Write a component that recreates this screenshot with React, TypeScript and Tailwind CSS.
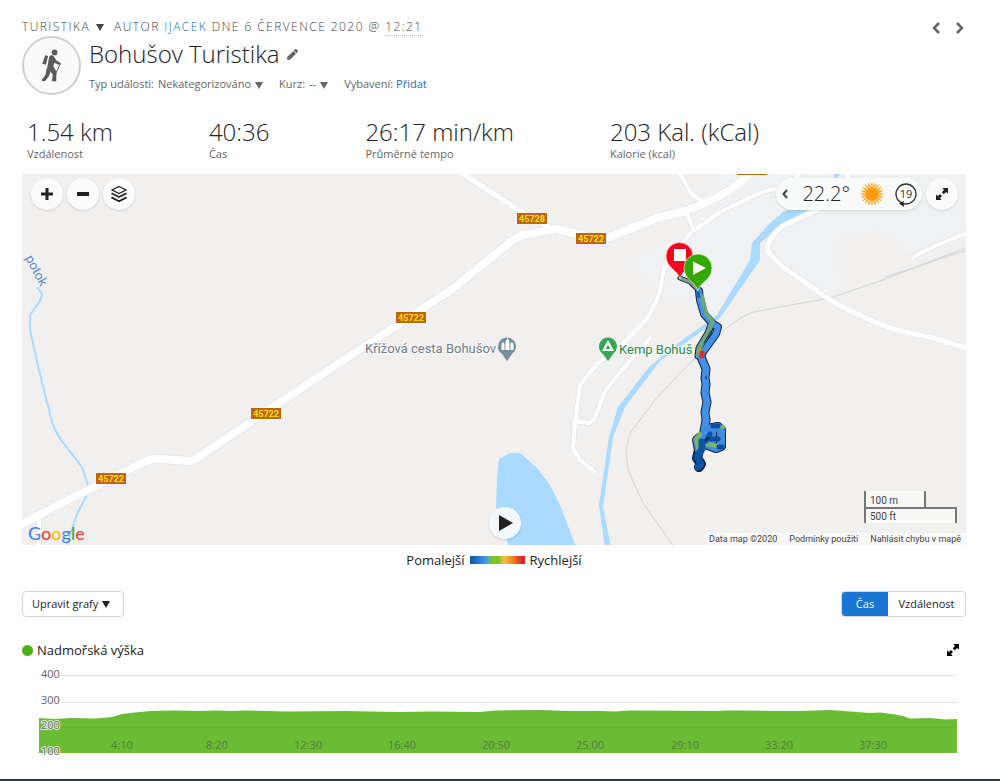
import { useState } from "react";
import { FaPen } from "react-icons/fa";

const stats = [
  { value: "1.54 km", label: "Vzdálenost" },
  { value: "40:36", label: "Čas" },
  { value: "26:17 min/km", label: "Průměrné tempo" },
  { value: "203 Kal. (kCal)", label: "Kalorie (kcal)" },
];

const shields = [
  { x: 532, y: 218, text: "45728" },
  { x: 591, y: 238, text: "45722" },
  { x: 411, y: 317, text: "45722" },
  { x: 266, y: 413, text: "45722" },
  { x: 111, y: 478, text: "45722" },
];

const roads = [
  { d: "M457 170L520 211L552 229", w: 5 },
  { d: "M678 170L692 195L706 203", w: 4 },
  { d: "M686 213L693 228", w: 4 },
  { d: "M39 514V550", w: 4 },
  { d: "M802 170L790 186L777 189Q766 190 760 193L720 212L693 231L672 254Q663 266 662 280Q660 300 645 321L620 347L597 364L580 385L575 423L573 449L580 460L595 472", w: 4 },
  { d: "M576 421L588 423Q594 422 596 415L605 391L628 363L650 338", w: 4 },
  { d: "M850 170L840 196L817 210L783 226Q763 242 769 253L783 267L830 300Q870 322 897 330L933 338L970 349", w: 5 },
  { d: "M913 257L937 245L970 232", w: 4 },
  { d: "M15 528L60 504L110 479L146 461Q153 458 161 459L190 461Q194 460 200 456L333 367L410 317L455 287L503 248Q514 238 523 235L557 229L590 237Q600 240 610 237L657 218L682 212Q695 208 705 203Q730 193 752 172", w: 8 },
];

const yTicks = [
  { y: 15, text: "400" },
  { y: 41, text: "300" },
  { y: 66, text: "200" },
  { y: 92, text: "100" },
];

const xTicks = [
  { x: 99, text: "4:10" },
  { x: 194, text: "8:20" },
  { x: 285, text: "12:30" },
  { x: 379, text: "16:40" },
  { x: 473, text: "20:50" },
  { x: 567, text: "25:00" },
  { x: 662, text: "29:10" },
  { x: 756, text: "33:20" },
  { x: 850, text: "37:30" },
];

function Caret({ className = "" }: { className?: string }) {
  return (
    <svg viewBox="0 0 8 7" className={`h-[7px] w-2 shrink-0 ${className}`} fill="currentColor" aria-hidden="true">
      <path d="M0 0H8L4 7Z" />
    </svg>
  );
}

function ExpandIcon({ className = "" }: { className?: string }) {
  return (
    <svg viewBox="0 0 12 12" className={className} fill="currentColor" aria-hidden="true">
      <path d="M6.5 0H12V5.5L10 4L7.8 6.2L5.8 4.2L8 2Z" />
      <path d="M0 6.5L2 8L4 6L6 8L4 10L5.5 12H0Z" />
    </svg>
  );
}

function Hiker() {
  return (
    <svg viewBox="120 147 65 101" className="h-[33px] w-[21px] text-[#5b5b5b]" fill="currentColor" aria-hidden="true">
      <circle cx="162" cy="157" r="9" />
      <path d="M133 166L142 168L135 195L124 192Z" />
      <path d="M146 168Q152 163 159 168L167 181L180 190L177 196L161 189L158 200L168 217L167 246H155L156 224L139 206Z" />
      <path d="M138 204L150 217L143 233L131 247L121 244L134 226Z" />
      <path d="M181 190L154 246" stroke="currentColor" strokeWidth="3" />
    </svg>
  );
}

function LayersIcon() {
  return (
    <svg viewBox="0 0 18 18" className="size-[18px]" fill="none" stroke="currentColor" aria-hidden="true">
      <path d="M9 1.5L16 5L9 8.5L2 5Z" strokeWidth="1.3" />
      <path d="M1.5 8.2L9 12L16.5 8.2" strokeWidth="1.8" />
      <path d="M1.5 12.4L9 16.2L16.5 12.4" strokeWidth="1.8" />
    </svg>
  );
}

function Sun() {
  const rays = Array.from({ length: 20 }, (_, i) => i * 18);
  return (
    <svg viewBox="0 0 24 24" className="size-6" fill="#fb9d0a" aria-hidden="true">
      <circle cx="12" cy="12" r="7" />
      {rays.map((a) => (
        <path key={a} d="M11.2 4.4L12 0.4L12.8 4.4Z" stroke="#fb9d0a" strokeWidth="0.4" transform={`rotate(${a} 12 12)`} />
      ))}
    </svg>
  );
}

function Wind() {
  return (
    <svg viewBox="0 0 24 26" className="h-[26px] w-6" aria-hidden="true">
      <circle cx="12" cy="13" r="10" fill="none" stroke="#333" strokeWidth="1.3" />
      <path d="M5 22.5L9.5 20L10 26Z" fill="#222" />
      <text x="12" y="17" textAnchor="middle" fontSize="11" fill="#333">19</text>
    </svg>
  );
}

function ActivityMap() {
  return (
    <svg
      viewBox="22 174 944 371"
      preserveAspectRatio="xMidYMid slice"
      className="block size-full"
      role="img"
      aria-label="Mapa trasy"
      fontFamily="Roboto, sans-serif"
    >
      <rect x="22" y="174" width="944" height="371" fill="#f1f0ef" />
      <path
        fill="#eff1f3"
        d="M630 262L666 245L690 228L715 174H966V232L913 257L880 230L835 240L842 290L820 297L770 255L740 290L712 315L665 296Z"
      />

      {/* water */}
      <g fill="#aadaff">
        <path d="M835 170L840 174L825 196L810 209L783 224L760 243V260L720 318L677 349L660 361L625 407L613 437L603 507L611 548H605L599 505L609 437L618 407L650 366L677 344L717 315L750 260L752 243L767 226L783 212L800 204L834 180Z" />
        <path d="M499 459L510 453L520 453L537 468L550 485L560 505L576 547H509L496 507L497 477Z" />
      </g>
      <path d="M37 287L42 294L40 301L30 315V330L39 370L51 418Q54 430 61 440L82 467L88 485L87 495L78 512L74 523L66 548" fill="none" stroke="#aadaff" strokeWidth="2" />

      {/* railway */}
      <g fill="none" stroke="#d3d3d3">
        <path d="M970 246L883 280L830 298Q790 305 753 312Q740 317 728 327L683 370L655 400L630 433L626 450L628 470L643 503L675 548" />
        <path d="M970 249L885 277" />
      </g>

      <g fill="none" strokeLinejoin="round" strokeLinecap="round">
        {roads.map((r) => (
          <path key={r.d} d={r.d} stroke="#e1e3e6" strokeWidth={r.w + 1.4} />
        ))}
        {roads.map((r) => (
          <path key={r.d} d={r.d} stroke="#ffffff" strokeWidth={r.w} />
        ))}
      </g>

      {shields.map((s) => (
        <g key={`${s.x}-${s.y}`}>
          <rect x={s.x - 15} y={s.y - 5} width="30" height="11" fill="#b9690e" />
          <text x={s.x} y={s.y + 4} textAnchor="middle" fontSize="9" fontWeight="700" fill="#ffdb1c">
            {s.text}
          </text>
        </g>
      ))}
      <rect x="737" y="173" width="30" height="2" fill="#b9690e" />

      <text transform="translate(25 258) rotate(62)" fontSize="13" fill="#5a8cc9">potok</text>

      <g fontSize="13" strokeWidth="2" stroke="#f7f7f7" paintOrder="stroke">
        <text x="365" y="353" fill="#708089">Křížová cesta Bohušov</text>
        <text x="619" y="354" fill="#2f8a4c">Kemp Bohuš</text>
      </g>

      <path d="M507 361L502 354A9 9 0 1 1 512 354Z" fill="#78909c" />
      <path d="M501.500 350V344L503 342L504.500 344V350ZM505.500 350V342L507.500 338L509.500 342V350ZM510.500 350V344L512 342L513.500 344V350Z" fill="#fff" />
      <path d="M608 361L603 354A9 9 0 1 1 613 354Z" fill="#34a853" />
      <path fillRule="evenodd" d="M602 351L608 340L614 351ZM605.500 349H610.500L608 345Z" fill="#fff" />

      {/* recorded track */}
      <g fill="none" strokeLinejoin="round" strokeLinecap="round">
        <g stroke="#0f2140">
          <path d="M680 278L690 282L698 290" strokeWidth="5" />
          <path d="M699 291L700 300L704 314L713 324L718 327L716 334L703 352L701 357" strokeWidth="8" />
          <path d="M711 325L708 333L699 348L698 356" strokeWidth="7" />
          <path d="M701 357L706 369L705 378L706 384L705 393L707 402L705 412L706 420L704 431" strokeWidth="9" />
          <path d="M707 429L718 427L721 430V446L716 448L706 444L705 434L697 440L699 450L697 458L701 464L699 467" strokeWidth="10" />
        </g>
        <path d="M680 278L690 282L698 290" stroke="#7da58c" strokeWidth="3" />
        <path d="M699 291L700 300L704 314L713 324L718 327L716 334L703 352L701 357" stroke="#4391e6" strokeWidth="6" />
        <path d="M711 325L708 333L699 348L698 356" stroke="#6da58a" strokeWidth="5" />
        <path d="M701 357L706 369L705 378L706 384L705 393L707 402L705 412L706 420L704 431" stroke="#4391e6" strokeWidth="7" />
        <path d="M702 296L706 313L713 322" stroke="#6da57e" strokeWidth="4" />
        <path d="M698 292L699 297" stroke="#1261b4" strokeWidth="3" />
        <path d="M711 331L704 343" stroke="#0f2140" strokeWidth="1" />
        <path d="M700 349L699 352" stroke="#a1a544" strokeWidth="3" />
        <path d="M702 353V356" stroke="#d9303a" strokeWidth="5" />
        <path d="M706 376V379" stroke="#0f2140" strokeWidth="1" />
        <path d="M707 429L718 427L721 430V446L716 448L706 444L705 434L697 440L699 450" stroke="#3f8de0" strokeWidth="8" />
        <path d="M712 432V440" stroke="#3f8de0" strokeWidth="8" />
        <path d="M700 434L696 439L698 448M706 444L717 446M722 427H723" stroke="#79b765" strokeWidth="4" />
        <path d="M713 426H718M706 441L710 434M711 439H718M719 447H722" stroke="#0b4f9f" strokeWidth="5" />
        <path d="M702 442V449L697 457L701 464L698 467" stroke="#0d54a8" strokeWidth="7" />
        <path d="M706 440L708 438" stroke="#0f2140" strokeWidth="2" />
      </g>

      <g stroke="#ffffff" strokeOpacity="0.6">
        <path d="M680 279C678 270 666 268 666 256A13.500 13.500 0 0 1 693 256C693 268 682 270 680 279Z" fill="#f5051e" />
        <path d="M698 291C696 282 684 280 684 268A14 14 0 0 1 712 268C712 280 700 282 698 291Z" fill="#35a800" />
      </g>
      <rect x="674" y="249" width="12" height="12" fill="#fff" />
      <path d="M693 261.500V275L706 268Z" fill="#fff" />
    </svg>
  );
}

function ElevationChart() {
  return (
    <svg viewBox="22 0 944 99" className="block h-auto w-full" role="img" aria-label="Nadmořská výška">
      <path d="M61 15.500H957M61 42.500H957" stroke="#e3e3e3" />
      <path
        fill="#6bbc35"
        d="M39 93V58L55 59L70 58L96 58.500L112 57L122 54L135 52.500L150 51L175 50.500L200 51L215 50.500L232 51L245 50.500L268 51L285 51.500L345 51L370 51.500L400 52L430 51.500L480 52L495 50.500L540 50L570 51L600 51L615 51.500L630 50.500L720 51L725 50.500L740 50.500L775 51L800 51L830 50L850 51.500L870 53L880 52.500L895 54.500L903 56L910 58.500L930 58L945 59.500L957 59V93Z"
      />
      <path d="M39 67.500H957" stroke="#64b431" />
      <g fontSize="11" fill="#666666" stroke="#ffffff" strokeWidth="2" strokeOpacity="0.8" paintOrder="stroke">
        {yTicks.map((t) => (
          <text key={t.text} x="41" y={t.y + 3}>{t.text}</text>
        ))}
      </g>
      <g fontSize="11" fill="#547a42" textAnchor="middle">
        {xTicks.map((t) => (
          <text key={t.text} x={t.x + 23} y="89">{t.text}</text>
        ))}
      </g>
    </svg>
  );
}

export default function App() {
  const [axis, setAxis] = useState("time");

  const roundButton = "flex size-8 items-center justify-center rounded-full bg-[#fbfbfb] text-[#222] shadow-sm";

  return (
    <div className="border-b-2 border-[#2b3a45] bg-[#fefefe] font-['Open_Sans',sans-serif] text-[#222]">
      <div className="pr-[34px] pb-5 pl-[22px]">
        <header className="pt-[18px]">
          <div className="flex items-start justify-between">
            <div className="flex items-center text-xs leading-[18px] font-light tracking-[0.12em] text-[#444] uppercase">
              <label className="flex items-center gap-1.5">
                <select aria-label="Typ aktivity" className="appearance-none [field-sizing:content] uppercase">
                  <option>Turistika</option>
                </select>
                <Caret />
              </label>
              <p className="ml-2.5">
                Autor <a href="#autor" className="text-[#1c6cbf]">ijacek</a> dne 6 července 2020 @{" "}
                <span className="border-b border-dotted border-[#bbb]">12:21</span>
              </p>
            </div>
            <nav className="flex gap-4 pt-1 pr-0.5 text-[#666]">
              <button aria-label="Předchozí">
                <svg viewBox="0 0 8 12" className="h-3 w-2" fill="none" stroke="currentColor" strokeWidth="2.5">
                  <path d="M7 1L2 6L7 11" />
                </svg>
              </button>
              <button aria-label="Další">
                <svg viewBox="0 0 8 12" className="h-3 w-2" fill="none" stroke="currentColor" strokeWidth="2.5">
                  <path d="M1 1L6 6L1 11" />
                </svg>
              </button>
            </nav>
          </div>

          <div className="flex gap-2">
            <div className="flex size-[59px] items-center justify-center rounded-full border-2 border-[#cfcfcf] bg-[#fafafa]">
              <Hiker />
            </div>
            <div>
              <div className="flex items-center gap-2">
                <h1 className="text-2xl leading-9 font-light">Bohušov Turistika</h1>
                <button aria-label="Upravit název" className="text-[#666]">
                  <FaPen className="size-[11px]" />
                </button>
              </div>
              <div className="mt-1 flex items-center gap-4 text-[11px] leading-4 text-[#666]">
                <label className="flex items-center gap-1">
                  Typ události:
                  <select className="appearance-none [field-sizing:content]">
                    <option>Nekategorizováno</option>
                  </select>
                  <Caret className="mt-0.5" />
                </label>
                <label className="flex items-center gap-1">
                  Kurz:
                  <select className="appearance-none [field-sizing:content]">
                    <option>--</option>
                  </select>
                  <Caret className="mt-0.5" />
                </label>
                <span>
                  Vybavení: <a href="#vybaveni" className="text-[#1c6cbf]">Přidat</a>
                </span>
              </div>
            </div>
          </div>
        </header>

        <dl className="flex gap-24 pt-[23px] pb-3 pl-[5px]">
          {stats.map((s) => (
            <div key={s.label} className="flex flex-col-reverse">
              <dt className="text-[11px] leading-4 text-[#666]">{s.label}</dt>
              <dd className="text-2xl leading-7 font-light whitespace-nowrap">{s.value}</dd>
            </div>
          ))}
        </dl>

        <section className="relative aspect-[944/371] overflow-hidden">
          <ActivityMap />

          <div className="absolute top-1 right-2 left-[9px] flex justify-between">
            <div className="flex gap-1">
              <button aria-label="Přiblížit" className={roundButton}>
                <svg viewBox="0 0 12 12" className="size-3" stroke="currentColor" strokeWidth="3">
                  <path d="M6 0V12M0 6H12" />
                </svg>
              </button>
              <button aria-label="Oddálit" className={roundButton}>
                <svg viewBox="0 0 12 12" className="size-3" stroke="currentColor" strokeWidth="4">
                  <path d="M0 6H12" />
                </svg>
              </button>
              <button aria-label="Vrstvy" className={roundButton}>
                <LayersIcon />
              </button>
            </div>
            <div className="flex gap-1">
              <div className="flex h-8 items-center gap-2.5 rounded-full bg-[#f9fafa] pr-1 pl-1.5 shadow-sm">
                <button aria-label="Počasí" className="mr-1">
                  <svg viewBox="0 0 6 10" className="h-2.5 w-1.5" fill="none" stroke="#444" strokeWidth="2">
                    <path d="M5 1L1.500 5L5 9" />
                  </svg>
                </button>
                <span className="text-xl font-light">22.2°</span>
                <Sun />
                <Wind />
              </div>
              <button aria-label="Celá obrazovka" className={roundButton}>
                <ExpandIcon className="size-3" />
              </button>
            </div>
          </div>

          <button aria-label="Přehrát" className="absolute bottom-1.5 left-[49.5%] flex size-8 items-center justify-center rounded-full bg-[#f5f8fb] shadow-sm">
            <svg viewBox="0 0 14 16" className="ml-0.5 h-4 w-3.5" fill="#222">
              <path d="M0 0L14 8L0 16Z" />
            </svg>
          </button>

          <a href="#google" aria-label="Google" className="absolute bottom-0 left-1.5 font-[Lato,sans-serif] text-lg leading-6 font-medium">
            <span className="text-[#4285f4]">G</span>
            <span className="text-[#ea4335]">o</span>
            <span className="text-[#fbbc05]">o</span>
            <span className="text-[#4285f4]">g</span>
            <span className="text-[#34a853]">l</span>
            <span className="text-[#ea4335]">e</span>
          </a>

          <div className="absolute right-0 bottom-0 flex flex-col items-end font-[Roboto,sans-serif] text-[10px] leading-3 text-[#444]">
            <div className="mr-[9px] mb-[10px] w-[93px]">
              <div className="h-4 w-[62px] border-x-2 border-[#777] bg-white/50 px-1 pt-1">100 m</div>
              <div className="h-4 border-x-2 border-t-2 border-[#777] bg-white/50 px-1 pt-0.5">500 ft</div>
            </div>
            <div className="flex gap-3 bg-white/50 pr-[5px] pl-1 text-[9px]">
              <span>Data map ©2020</span>
              <a href="#podminky">Podmínky použití</a>
              <a href="#chyba">Nahlásit chybu v mapě</a>
            </div>
          </div>
        </section>

        <div className="flex items-center justify-center gap-[5px] pt-[5px] text-[13px] leading-5">
          <span>Pomalejší</span>
          <span className="h-2 w-[55px] bg-[linear-gradient(90deg,#0a55a8_0%,#3f98f5_28%,#7fc41c_40%,#86c520_52%,#f0c040_62%,#f58220_78%,#d8232a_95%)]" />
          <span>Rychlejší</span>
        </div>

        <div className="mt-[21px] flex justify-between text-[11px]">
          <button className="flex h-[26px] w-[102px] items-center gap-1 rounded border border-[#d5d5d5] bg-white px-[9px]">
            Upravit grafy
            <Caret />
          </button>
          <div className="flex h-[26px] overflow-hidden rounded border border-[#d5d5d5] bg-white">
            <button
              aria-pressed={axis === "time"}
              onClick={() => setAxis("time")}
              className={axis === "time" ? "w-[46px] bg-[#1976d2] text-white" : "w-[46px]"}
            >
              Čas
            </button>
            <button
              aria-pressed={axis === "distance"}
              onClick={() => setAxis("distance")}
              className={axis === "distance" ? "w-[77px] bg-[#1976d2] text-white" : "w-[77px]"}
            >
              Vzdálenost
            </button>
          </div>
        </div>

        <section className="mt-[23px]">
          <div className="flex items-center justify-between pr-[7px]">
            <h2 className="flex items-center gap-1 text-[13px] leading-5">
              <span className="size-[11px] rounded-full bg-[#4caf17]" />
              Nadmořská výška
            </h2>
            <button aria-label="Zvětšit graf">
              <ExpandIcon className="size-3 text-black" />
            </button>
          </div>
          <ElevationChart />
        </section>
      </div>
    </div>
  );
}
